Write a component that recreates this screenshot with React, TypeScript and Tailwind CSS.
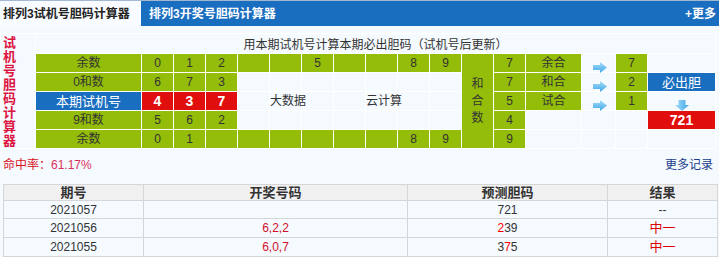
import React from "react";

const GREEN = "bg-[#94bd0a]";
const LIGHT = "bg-[#f5faff]";

function RightArrow() {
  return (
    <svg width="14" height="11" viewBox="0 0 14 11">
      <defs>
        <linearGradient id="ra" x1="0" y1="0" x2="0" y2="1">
          <stop offset="0" stopColor="#a6ddfa" />
          <stop offset="1" stopColor="#3fa6e6" />
        </linearGradient>
      </defs>
      <path d="M0 3 H7 V0 L14 5.5 L7 11 V8 H0 Z" fill="url(#ra)" />
    </svg>
  );
}

function DownArrow() {
  return (
    <svg width="14" height="11" viewBox="0 0 14 11">
      <defs>
        <linearGradient id="da" x1="0" y1="0" x2="1" y2="0">
          <stop offset="0" stopColor="#a6ddfa" />
          <stop offset="1" stopColor="#3fa6e6" />
        </linearGradient>
      </defs>
      <path d="M3.5 0 H10.5 V5 H14 L7 11 L0 5 H3.5 Z" fill="url(#da)" />
    </svg>
  );
}

type CellProps = { cls?: string; children?: React.ReactNode };
function Cell({ cls = "", children }: CellProps) {
  return (
    <div className={`flex items-center justify-center text-[12px] leading-none text-[#333] whitespace-nowrap ${cls}`}>
      {children}
    </div>
  );
}

export default function App() {
  const row1 = ["0", "1", "2", "", "", "5", "", "", "8", "9"];
  const row5 = ["0", "1", "", "", "", "", "", "", "8", "9"];
  const emptyWhite = (n: number, key: string) =>
    Array.from({ length: n }).map((_, i) => <Cell key={key + i} cls={LIGHT} />);

  return (
    <div className="w-[719px] h-[257px] overflow-hidden bg-[#f5faff] font-['Liberation_Sans','Noto_Sans_CJK_SC',sans-serif]">
      {/* Top bar */}
      <div className="h-[26px] border-t border-[#a3b8d0] flex">
        <div className="w-[141px] bg-[#f8fbff] flex items-center pl-[3px] text-[12px] font-bold text-[#222] whitespace-nowrap">
          排列3试机号胆码计算器
        </div>
        <div className="flex-1 bg-[#1a6ebf] flex items-center justify-between pl-[8px] pr-[3px] text-[12px] font-bold text-white whitespace-nowrap">
          <span>排列3开奖号胆码计算器</span>
          <span>+更多</span>
        </div>
      </div>

      {/* Calculator grid */}
      <div className="mt-[7px] grid w-max bg-white gap-px p-px grid-cols-[34px_105px_repeat(10,31px)_31px_31px_55px_33px_31px_67px] grid-rows-[19px_repeat(5,18px)]">
        <div className={`row-span-6 ${LIGHT} pl-[2px] pt-[2px] text-[13px] leading-[14px] font-bold text-[#dc1440]`}>
          <div className="w-[14px] break-all">试机号胆码计算器</div>
        </div>
        <div className={`col-span-17 ${LIGHT} flex items-center justify-center text-[12px] text-[#333] pt-[2px]`}>
          用本期试机号计算本期必出胆码（试机号后更新）
        </div>

        {/* Row 1 */}
        <Cell cls={GREEN}>余数</Cell>
        {row1.map((d, i) => (
          <Cell key={"r1" + i} cls={GREEN}>{d}</Cell>
        ))}
        <div className={`row-span-5 ${GREEN} flex flex-col items-center justify-center text-[12px] leading-[17px] text-[#333]`}>
          <span>和</span>
          <span>合</span>
          <span>数</span>
        </div>
        <Cell cls={GREEN}>7</Cell>
        <Cell cls={GREEN}>余合</Cell>
        <div className={`${LIGHT} flex items-end justify-center pl-[2px]`}>
          <div className="-mb-[1px]"><RightArrow /></div>
        </div>
        <Cell cls={GREEN}>7</Cell>
        <Cell cls={LIGHT} />

        {/* Row 2 */}
        <Cell cls={GREEN}>0和数</Cell>
        <Cell cls={GREEN}>6</Cell>
        <Cell cls={GREEN}>7</Cell>
        <Cell cls={GREEN}>3</Cell>
        {emptyWhite(7, "r2w")}
        <Cell cls={GREEN}>7</Cell>
        <Cell cls={GREEN}>和合</Cell>
        <div className={`${LIGHT} flex items-end justify-center pl-[2px]`}>
          <div className="-mb-[1px]"><RightArrow /></div>
        </div>
        <Cell cls={GREEN}>2</Cell>
        <Cell cls="bg-[#1a6ebf] !text-white text-[13px]">必出胆</Cell>

        {/* Row 3 */}
        <Cell cls="bg-[#1a6ebf] !text-white text-[13px]">本期试机号</Cell>
        <Cell cls="bg-[#e10e0e] !text-white font-bold text-[14px]">4</Cell>
        <Cell cls="bg-[#e10e0e] !text-white font-bold text-[14px]">3</Cell>
        <Cell cls="bg-[#e10e0e] !text-white font-bold text-[14px]">7</Cell>
        <Cell cls={LIGHT} />
        <div className={`${LIGHT} relative z-10 flex items-center text-[12px] text-[#333] whitespace-nowrap`}>大数据</div>
        <Cell cls={LIGHT} />
        <Cell cls={LIGHT} />
        <div className={`${LIGHT} relative z-10 flex items-center text-[12px] text-[#333] whitespace-nowrap`}>云计算</div>
        <Cell cls={LIGHT} />
        <Cell cls={LIGHT} />
        <Cell cls={GREEN}>5</Cell>
        <Cell cls={GREEN}>试合</Cell>
        <div className={`${LIGHT} flex items-end justify-center pl-[2px]`}>
          <div className="-mb-[1px]"><RightArrow /></div>
        </div>
        <Cell cls={GREEN}>1</Cell>
        <div className={`${LIGHT} flex items-end justify-center pl-[1px]`}>
          <div className="-mb-[1px]"><DownArrow /></div>
        </div>

        {/* Row 4 */}
        <Cell cls={GREEN}>9和数</Cell>
        <Cell cls={GREEN}>5</Cell>
        <Cell cls={GREEN}>6</Cell>
        <Cell cls={GREEN}>2</Cell>
        {emptyWhite(7, "r4w")}
        <Cell cls={GREEN}>4</Cell>
        <Cell cls={LIGHT} />
        <Cell cls={LIGHT} />
        <Cell cls={LIGHT} />
        <Cell cls="bg-[#e10e0e] !text-white font-bold text-[14px]">721</Cell>

        {/* Row 5 */}
        <Cell cls={GREEN}>余数</Cell>
        {row5.map((d, i) => (
          <Cell key={"r5" + i} cls={GREEN}>{d}</Cell>
        ))}
        <Cell cls={GREEN}>9</Cell>
        <Cell cls={LIGHT} />
        <Cell cls={LIGHT} />
        <Cell cls={LIGHT} />
        <Cell cls={LIGHT} />
      </div>

      {/* Hit rate */}
      <div className="mt-[7px] h-[18px] flex items-center justify-between pl-[3px] pr-[6px] text-[12px]">
        <span>
          <span className="text-[#d8101c]">命中率：</span>
          <span className="text-[#d83060]">61.17%</span>
        </span>
        <span className="text-[#1c3c8c]">更多记录</span>
      </div>

      {/* History table */}
      <div className="mt-[10px] ml-[3px] grid w-max bg-[#d6d6d6] gap-px p-px grid-cols-[139px_263px_199px_109px] grid-rows-[15px_17px_18px_18px] text-[12px] text-[#333]">
        <div className="bg-[#f0f0f0] flex items-center justify-center font-bold text-[13px]">期号</div>
        <div className="bg-[#f0f0f0] flex items-center justify-center font-bold text-[13px]">开奖号码</div>
        <div className="bg-[#f0f0f0] flex items-center justify-center font-bold text-[13px]">预测胆码</div>
        <div className="bg-[#f0f0f0] flex items-center justify-center font-bold text-[13px]">结果</div>

        <div className={`${LIGHT} flex items-center justify-center`}>2021057</div>
        <div className={`${LIGHT}`}></div>
        <div className={`${LIGHT} flex items-center justify-center`}>721</div>
        <div className={`${LIGHT} flex items-center justify-center`}>--</div>

        <div className={`${LIGHT} flex items-center justify-center`}>2021056</div>
        <div className={`${LIGHT} flex items-center justify-center text-[#d0102a]`}>6,2,2</div>
        <div className={`${LIGHT} flex items-center justify-center`}>
          <span className="text-[#f00]">2</span>39
        </div>
        <div className={`${LIGHT} flex items-center justify-center text-[#d00] text-[13px]`}>中一</div>

        <div className={`${LIGHT} flex items-center justify-center`}>2021055</div>
        <div className={`${LIGHT} flex items-center justify-center text-[#d0102a]`}>6,0,7</div>
        <div className={`${LIGHT} flex items-center justify-center`}>
          3<span className="text-[#f00]">7</span>5
        </div>
        <div className={`${LIGHT} flex items-center justify-center text-[#d00] text-[13px]`}>中一</div>
      </div>
    </div>
  );
}
